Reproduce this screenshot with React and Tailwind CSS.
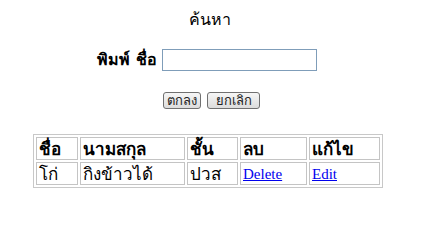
import React, { useState } from "react";

const rows = [{ first: "โก่", last: "กิงข้าวได้", grade: "ปวส" }];

const Btn = ({ children, w }) => (
	<button
		type="button"
		className={`${w} h-[17px] rounded-[3px] border border-[#707070] bg-gradient-to-b from-[#f6f6f6] to-[#dcdcdc] text-[13px] leading-[14px] text-[#222] font-['Tahoma','DejaVu_Sans',sans-serif]`}
	>
		{children}
	</button>
);

const cell = "border border-[#c4c4c4] px-[2px] py-0 leading-[20px] text-left";

const App = () => {
	const [name, setName] = useState("");

	return (
		<div className="w-[425px] h-[247px] bg-white font-['Liberation_Serif','DejaVu_Serif',serif] text-black">
			<div className="w-[420px] pt-[10px]">
				{/* title */}
				<div className="text-center text-[16px] leading-[20px] font-['Tahoma','DejaVu_Sans',sans-serif]">
					ค้นหา
				</div>

				{/* search row */}
				<div className="flex items-center mt-[19px] pl-[97px] gap-[5px]">
					<span className="text-[16px] font-bold leading-[22px] font-['Tahoma','DejaVu_Sans',sans-serif]">
						พิมพ์ ชื่อ
					</span>
					<input
						value={name}
						onChange={(e) => setName(e.target.value)}
						className="w-[155px] h-[22px] border border-[#7f9db9] px-1 text-[13px] outline-none"
					/>
				</div>

				{/* buttons */}
				<div className="flex mt-[21px] pl-[163px] gap-[6px]">
					<Btn w="w-[38px]">ตกลง</Btn>
					<Btn w="w-[53px]">ยกเลิก</Btn>
				</div>

				{/* table */}
				<table className="mt-[25px] ml-[33px] w-[350px] border border-[#c8c8c8] border-separate border-spacing-[2px] text-[17px] font-['Tahoma','DejaVu_Sans',sans-serif]">
					<thead>
						<tr className="h-[23px]">
							<th className={`${cell} w-[42px] font-bold`}>ชื่อ</th>
							<th className={`${cell} w-[105px] font-bold`}>นามสกุล</th>
							<th className={`${cell} w-[51px] font-bold`}>ชั้น</th>
							<th className={`${cell} w-[67px] font-bold`}>ลบ</th>
							<th className={`${cell} font-bold`}>แก้ไข</th>
						</tr>
					</thead>
					<tbody>
						{rows.map((r, i) => (
							<tr key={i} className="h-[22px]">
								<td className={cell}>{r.first}</td>
								<td className={cell}>{r.last}</td>
								<td className={cell}>{r.grade}</td>
								<td className={cell}>
									<a href="#" className="text-[15px] text-[#0000ee] underline font-['Liberation_Serif',serif]">Delete</a>
								</td>
								<td className={cell}>
									<a href="#" className="text-[15px] text-[#0000ee] underline font-['Liberation_Serif',serif]">Edit</a>
								</td>
							</tr>
						))}
					</tbody>
				</table>
			</div>
		</div>
	);
};

export default App;
